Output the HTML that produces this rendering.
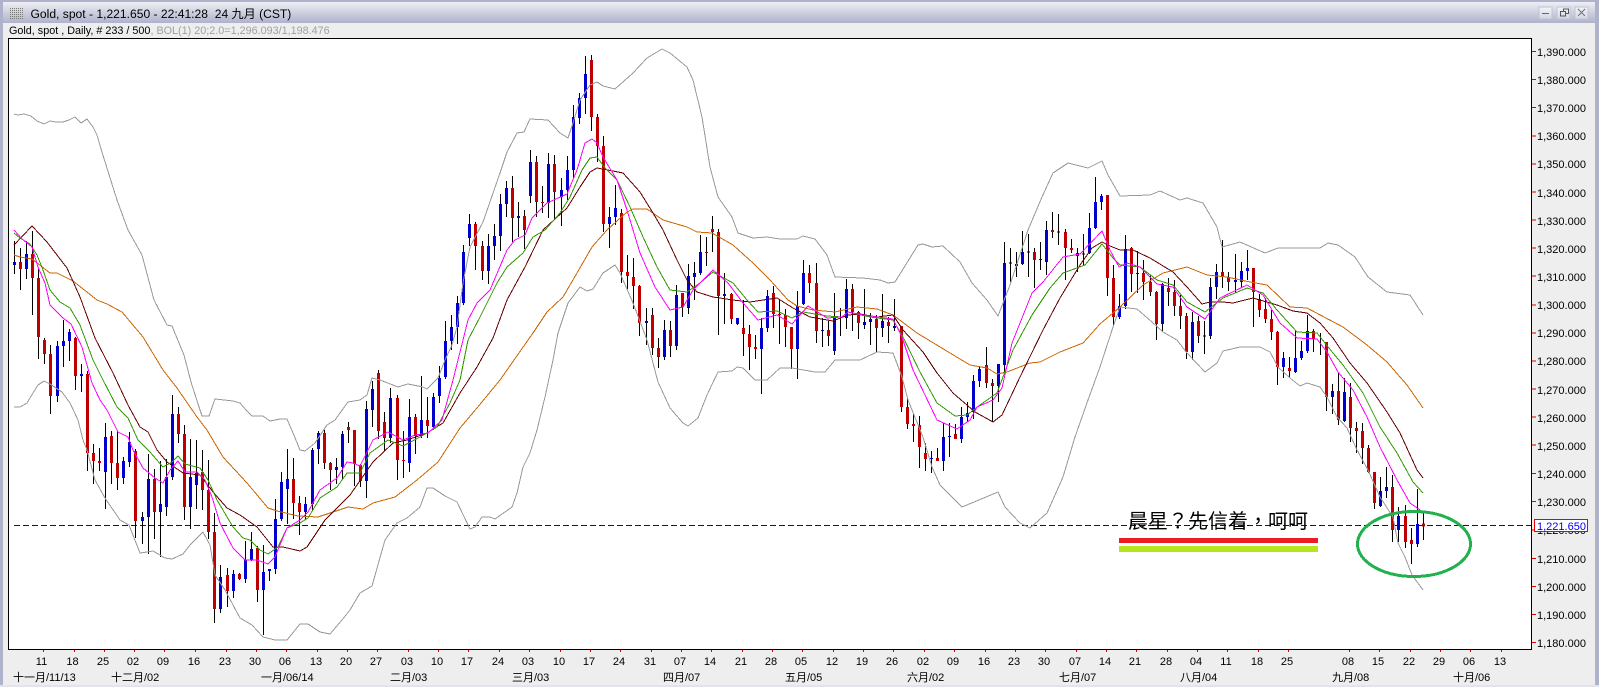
<!DOCTYPE html>
<html lang="zh">
<head>
<meta charset="utf-8">
<title>Gold, spot</title>
<style>
html,body{margin:0;padding:0;width:1599px;height:687px;overflow:hidden;background:#eeeeee}
svg{display:block;position:absolute;left:0;top:0}
text{font-family:"Liberation Sans","WenQuanYi Zen Hei","Noto Sans CJK SC",sans-serif;fill:#000}
.y text{font-size:11px}
.x text{font-size:11px;text-anchor:middle}
.m text{font-size:11px}
</style>
</head>
<body>
<svg width="1599" height="687" viewBox="0 0 1599 687" shape-rendering="crispEdges">
<defs>
<linearGradient id="tb" x1="0" y1="0" x2="0" y2="1"><stop offset="0" stop-color="#eeeef4"/><stop offset="1" stop-color="#aeb2cb"/></linearGradient>
<linearGradient id="bt" x1="0" y1="0" x2="0" y2="1"><stop offset="0" stop-color="#f4f4f8"/><stop offset="1" stop-color="#d2d5e2"/></linearGradient>
<pattern id="dots" width="2" height="2" patternUnits="userSpaceOnUse"><rect width="1" height="1" fill="#777"/></pattern>
</defs>
<rect width="1599" height="687" fill="#eeeeee"/>
<rect x="0" y="0" width="1599" height="2" fill="#aeb2cb"/>
<rect x="0" y="0" width="3" height="687" fill="#aeb2cb"/>
<rect x="1595" y="0" width="4" height="687" fill="#aeb2cb"/>
<rect x="0" y="685" width="1599" height="2" fill="#e2e3ef"/>
<rect x="3" y="2" width="1592" height="21" fill="url(#tb)"/>
<rect x="10" y="7" width="14" height="12" fill="url(#dots)"/>
<text x="30.500" y="18" font-size="12.100">Gold, spot - 1,221.650 - 22:41:28&#160; 24 九月 (CST)</text>
<rect x="1539" y="7" width="13" height="12" fill="url(#bt)" stroke="#c0c3d4"/>
<rect x="1557" y="7" width="13" height="12" fill="url(#bt)" stroke="#c0c3d4"/>
<rect x="1575" y="7" width="13" height="12" fill="url(#bt)" stroke="#c0c3d4"/>
<path d="M1542 13.500h7" stroke="#666" fill="none"/>
<path d="M1563.500 11.500v-2.500h5v4.500h-2.500M1560.500 11.500h5v4.500h-5z" stroke="#555" fill="none"/>
<path d="M1578 9l7 7M1585 9l-7 7" stroke="#777" fill="none"/>
<text x="9" y="34" font-size="10.800">Gold, spot , Daily, # 233 / 500<tspan fill="#a0a0a0">, BOL(1) 20;2.0=1,296.093/1,198.476</tspan></text>

<rect x="8.500" y="38.500" width="1523" height="611" fill="#ffffff" stroke="#000"/>

<path d="M14 525.500H1531" stroke="#0000ee" stroke-dasharray="6 3" fill="none"/>

<!-- wicks -->
<path fill="none" stroke="#000" d="M14.500 241V274M20.500 248V290M26.500 241V279M32.500 231V315M38.500 268V359M44.500 338V364M50.500 345V414M57.500 341V402M63.500 320V367M69.500 329V361M75.500 337V390M81.500 364V392M87.500 371V471M93.500 444V484M99.500 448V471M105.500 423V509M111.500 431V484M117.500 431V490M123.500 457V484M129.500 432V467M135.500 449V538M142.500 512V544M148.500 454V554M154.500 469V539M160.500 461V557M166.500 459V516M172.500 395V480M178.500 407V443M184.500 425V520M190.500 439V529M196.500 440V509M202.500 450V510M208.500 460V539M214.500 513V623M220.500 565V613M227.500 568V607M233.500 570V598M239.500 573V580M245.500 541V583M251.500 532V561M257.500 546V602M263.500 545V635M269.500 569V581M275.500 499V574M281.500 472V521M287.500 449V524M293.500 458V519M299.500 496V535M305.500 497V520M312.500 448V510M318.500 431V464M324.500 430V469M330.500 462V490M336.500 458V484M342.500 431V480M348.500 422V443M354.500 430V486M360.500 464V487M366.500 401V498M372.500 381V427M378.500 370V439M384.500 412V451M390.500 388V443M397.500 395V480M403.500 431V478M409.500 399V472M415.500 414V454M421.500 376V438M427.500 397V438M433.500 393V430M439.500 366V403M445.500 321V379M451.500 315V350M457.500 296V344M463.500 245V305M469.500 214V246M475.500 222V270M482.500 241V280M488.500 234V284M494.500 224V260M500.500 194V251M506.500 181V217M512.500 176V242M518.500 202V237M524.500 210V249M530.500 150V203M536.500 156V217M542.500 186V213M548.500 153V218M554.500 155V219M561.500 178V226M567.500 156V200M573.500 105V178M579.500 93V124M585.500 56V114M591.500 55V131M597.500 114V162M603.500 136V232M609.500 207V248M615.500 185V225M621.500 209V283M627.500 255V289M633.500 258V309M639.500 285V336M646.500 308V345M652.500 308V355M658.500 338V368M664.500 320V360M670.500 321V357M676.500 285V350M682.500 293V317M688.500 264V314M694.500 262V300M700.500 235V275M706.500 237V266M712.500 216V252M718.500 229V335M724.500 273V324M731.500 293V324M737.500 318V325M743.500 300V356M749.500 325V370M755.500 335V359M761.500 318V394M767.500 290V332M773.500 286V328M779.500 299V344M785.500 309V347M791.500 327V369M797.500 291V379M803.500 260V305M809.500 265V293M816.500 263V343M822.500 318V347M828.500 321V346M834.500 293V355M840.500 308V336M846.500 279V329M852.500 284V331M858.500 311V339M864.500 289V329M870.500 313V345M876.500 315V352M882.500 294V337M888.500 317V343M894.500 299V331M901.500 326V412M907.500 398V429M913.500 414V442M919.500 416V468M925.500 443V471M931.500 451V473M937.500 448V461M943.500 423V471M949.500 423V457M955.500 424V439M961.500 407V443M967.500 402V422M973.500 375V419M979.500 366V387M986.500 347V388M992.500 379V422M998.500 364V402M1004.500 242V373M1010.500 248V282M1016.500 252V277M1022.500 231V265M1028.500 234V277M1034.500 248V288M1040.500 242V270M1046.500 221V275M1052.500 212V238M1058.500 214V245M1065.500 229V280M1071.500 239V253M1077.500 248V272M1083.500 234V266M1089.500 213V254M1095.500 177V229M1101.500 194V210M1107.500 195V296M1113.500 265V325M1119.500 294V319M1125.500 235V309M1131.500 247V292M1137.500 251V293M1143.500 260V300M1150.500 275V296M1156.500 291V340M1162.500 283V331M1168.500 278V306M1174.500 280V316M1180.500 295V329M1186.500 313V359M1192.500 312V360M1198.500 316V343M1204.500 321V354M1210.500 278V339M1216.500 264V299M1222.500 240V288M1228.500 272V291M1235.500 254V293M1241.500 262V287M1247.500 250V280M1253.500 268V327M1259.500 294V317M1265.500 298V323M1271.500 310V340M1277.500 331V385M1283.500 352V378M1289.500 357V377M1295.500 330V373M1301.500 341V360M1307.500 315V353M1313.500 329V352M1320.500 333V355M1326.500 342V411M1332.500 384V414M1338.500 373V425M1344.500 378V422M1350.500 383V442M1356.500 422V453M1362.500 423V464M1368.500 445V473M1374.500 472V509M1380.500 477V507M1386.500 467V498M1392.500 475V542M1398.500 507V542M1405.500 505V548M1411.500 528V564M1417.500 489V547M1423.500 511V540M1009 263h3M1027 252h3M1057 232h3M1082 254h3M1203 336h3"/>

<!-- blue bodies -->
<path fill="none" stroke="#0000cc" stroke-width="3" d="M14.500 262V265M26.500 254V269M57.500 346V396M63.500 341V346M69.500 332V341M81.500 374V376M105.500 437V472M123.500 461V478M129.500 442V462M142.500 517V521M148.500 479V517M160.500 504V512M166.500 477V507M172.500 414V477M190.500 477V507M196.500 473V485M220.500 577V609M233.500 574V591M245.500 560V579M251.500 549V560M263.500 572V590M269.500 569V571M275.500 519V569M281.500 482V519M287.500 479V489M305.500 504V512M312.500 450V504M318.500 433V449M336.500 467V470M342.500 434V467M366.500 409V481M372.500 389V410M390.500 398V438M409.500 417V463M421.500 420V436M433.500 397V427M439.500 378V396M445.500 341V377M451.500 327V341M457.500 303V327M463.500 252V303M469.500 224V238M488.500 246V271M494.500 236V246M500.500 204V236M506.500 188V204M518.500 216V218M530.500 162V196M548.500 164V203M561.500 190V197M567.500 170V190M573.500 117V170M579.500 98V118M585.500 74V98M609.500 217V224M615.500 208V217M646.500 321V323M664.500 330V357M676.500 295V346M688.500 276V308M694.500 273V277M700.500 252V273M724.500 294V296M737.500 318V324M761.500 328V349M767.500 296V328M797.500 306V349M803.500 273V304M822.500 330V331M834.500 317V351M846.500 289V318M864.500 322V325M870.500 319V322M882.500 321V328M894.500 326V328M931.500 458V459M943.500 437V461M949.500 436V437M961.500 417V439M967.500 413V417M973.500 381V412M979.500 369V381M998.500 364V386M1004.500 263V365M1016.500 264V266M1022.500 252V264M1040.500 259V260M1046.500 230V262M1077.500 253V256M1089.500 228V253M1095.500 202V228M1101.500 196V202M1119.500 306V317M1125.500 249V306M1137.500 273V274M1162.500 284V324M1192.500 322V352M1210.500 287V336M1216.500 272V287M1235.500 280V282M1241.500 271V282M1247.500 268V271M1283.500 358V367M1295.500 358V372M1301.500 351V358M1307.500 331V351M1332.500 391V397M1344.500 392V421M1380.500 491V506M1386.500 487V491M1398.500 516V530M1417.500 524V544"/>

<!-- red bodies -->
<path fill="none" stroke="#c00000" stroke-width="3" d="M20.500 262V269M32.500 254V278M38.500 278V337M44.500 340V354M50.500 354V396M75.500 338V376M87.500 374V453M93.500 453V461M99.500 461V463M111.500 436V463M117.500 463V478M135.500 451V521M154.500 479V512M178.500 414V434M184.500 434V507M202.500 472V490M208.500 490V532M214.500 532V609M227.500 575V591M239.500 574V579M257.500 548V590M293.500 479V503M299.500 503V512M324.500 433V463M330.500 463V470M348.500 427V430M354.500 430V464M360.500 465V481M378.500 373V431M384.500 422V438M397.500 398V460M403.500 460V461M415.500 417V436M427.500 420V426M475.500 224V246M482.500 246V271M512.500 188V218M524.500 216V230M536.500 162V202M542.500 202V203M554.500 164V192M591.500 60V117M597.500 117V146M603.500 146V224M621.500 213V272M627.500 272V276M633.500 277V286M639.500 286V323M652.500 315V348M658.500 348V357M670.500 330V346M682.500 293V307M706.500 252V253M712.500 229V232M718.500 232V296M731.500 294V319M743.500 328V334M749.500 334V347M755.500 347V349M773.500 293V314M779.500 314V315M785.500 315V327M791.500 327V349M809.500 273V283M816.500 283V331M828.500 330V336M852.500 289V312M858.500 312V323M876.500 319V328M888.500 322V326M901.500 326V407M907.500 407V424M913.500 424V426M919.500 425V447M925.500 453V459M937.500 458V461M955.500 434V439M986.500 365V383M992.500 383V386M1034.500 252V260M1052.500 230V232M1065.500 232V248M1071.500 248V250M1107.500 195V278M1113.500 278V317M1131.500 248V274M1143.500 273V282M1150.500 282V292M1156.500 292V324M1168.500 288V292M1174.500 292V306M1180.500 306V316M1186.500 316V352M1198.500 321V336M1222.500 272V277M1228.500 277V282M1253.500 268V292M1259.500 299V310M1265.500 309V319M1271.500 319V332M1277.500 332V367M1289.500 368V371M1313.500 331V339M1326.500 342V397M1338.500 391V420M1350.500 397V428M1356.500 428V431M1362.500 431V448M1368.500 448V472M1374.500 472V503M1392.500 487V530M1405.500 516V542M1411.500 540V544M1422 525h3"/>

<!-- bollinger -->
<g fill="none" stroke="#999999">
<polyline points="14,114 18,115 24,114 31,116 37,121 44,124 50,121 56,122 63,122 69,120 75,117 81,123 87,119 93,127 97,135 101,149 117,200 128,230 142,255 154,300 167,325 172,326 184,355 191,382 199,407 202,416 209,416 215,399 233,401 240,403 246,410 252,416 263,416 270,421 280,419 287,419 293,433 300,450 305,451 315,443 327,425 335,420 340,413 348,402 360,400 367,395 372,378 380,380 398,387 408,384 423,387 427,389 438,378 445,360 452,345 457,327 463,283 470,247 483,222 500,173 507,152 517,133 524,132 530,119 548,120 560,133 568,138 573,123 580,100 590,85 597,82 603,86 615,89 633,73 647,58 662,49 670,53 687,67 693,80 702,117 710,167 718,197 732,217 738,233 753,238 767,237 780,239 797,239 803,236 815,239 827,255 835,277 863,278 880,280 888,283 895,282 918,245 923,244 932,247 943,246 960,262 972,283 987,300 998,316 1010,285 1028,230 1042,197 1053,173 1068,163 1088,168 1102,161 1108,175 1120,196 1150,195 1160,191 1180,200 1187,198 1203,203 1217,227 1222,247 1240,242 1265,253 1278,248 1320,248 1328,243 1338,245 1355,257 1368,277 1387,292 1410,295 1423,315"/>
<polyline points="14,407 20,407 27,403 33,393 38,385 44,381 50,384 62,392 70,403 78,420 83,440 87,450 95,480 105,498 120,520 129,525 140,553 147,552 153,551 165,558 172,559 183,554 190,545 197,538 203,532 210,545 215,575 225,590 240,618 252,625 263,637 275,640 287,640 300,624 308,624 320,632 330,634 342,620 350,610 360,593 372,586 385,540 397,523 407,518 420,507 427,488 433,488 445,496 457,502 470,529 475,527 482,517 490,517 495,519 512,507 517,493 523,467 530,453 537,430 545,397 553,360 558,333 568,303 580,287 587,291 593,289 603,273 615,265 620,273 633,303 647,340 658,382 670,408 683,423 688,426 698,418 707,395 718,372 732,371 737,367 743,368 755,380 767,380 780,368 792,368 815,372 825,372 835,360 860,360 877,352 893,353 902,377 908,400 923,437 932,467 940,485 962,507 998,492 1005,507 1020,523 1030,528 1047,513 1063,477 1075,437 1088,400 1100,367 1112,330 1120,307 1137,309 1152,322 1163,332 1177,340 1187,353 1205,372 1217,363 1223,351 1240,347 1260,347 1270,352 1278,367 1290,378 1300,386 1307,383 1320,387 1327,397 1337,417 1347,428 1357,450 1368,470 1380,497 1393,517 1398,543 1405,557 1412,575 1423,590"/>
</g>
<!-- orange -->
<polyline fill="none" stroke="#cc6600" points="14,255 20,257 32,259 50,273 57,273 73,281 97,300 107,304 122,312 143,337 163,370 177,388 197,417 207,430 223,457 247,483 268,508 277,511 298,516 318,517 333,512 348,507 363,509 373,503 395,497 417,480 438,462 460,428 477,408 500,380 533,333 547,312 563,297 577,273 592,247 607,230 627,212 633,209 647,209 663,220 687,227 697,232 712,233 733,245 753,263 770,280 788,300 797,306 813,310 835,312 857,307 877,309 893,315 917,333 950,353 970,365 987,368 997,374 1007,372 1030,363 1040,362 1060,352 1083,343 1100,324 1120,307 1143,285 1163,273 1187,267 1207,275 1227,277 1250,282 1267,285 1290,307 1307,308 1343,327 1367,345 1387,362 1407,385 1423,408"/>
<!-- brown -->
<polyline fill="none" stroke="#660000" points="14,245 32,226 47,242 67,268 80,297 95,338 113,373 128,405 140,427 148,432 157,450 167,462 183,473 200,475 213,492 227,508 240,515 257,527 273,547 283,547 300,551 307,547 325,520 350,495 373,462 393,443 407,440 427,433 443,423 460,393 477,367 493,338 507,300 525,267 543,230 567,208 580,187 590,172 597,168 613,171 623,173 640,192 653,213 663,230 677,260 687,280 697,292 713,297 733,300 750,302 763,300 777,298 793,308 810,317 833,321 848,315 860,314 877,317 893,315 903,330 923,352 937,373 953,393 975,412 993,422 1002,415 1020,377 1043,330 1060,298 1080,265 1092,248 1102,242 1110,246 1120,250 1133,250 1150,258 1173,272 1187,287 1202,304 1210,302 1223,302 1233,303 1253,298 1277,305 1293,311 1307,313 1320,323 1333,338 1350,363 1367,383 1387,412 1400,433 1417,470 1423,478"/>
<!-- green -->
<polyline fill="none" stroke="#339900" points="14,233 20,238 30,244 37,255 43,270 50,290 60,302 70,308 80,325 93,360 103,380 117,407 128,418 138,440 150,452 163,467 172,462 178,456 185,464 200,468 208,480 217,500 233,527 243,538 250,540 260,550 268,554 278,547 287,528 300,523 308,518 320,498 337,487 347,473 360,473 370,453 388,440 403,446 420,437 437,427 450,403 460,380 468,340 480,317 497,283 507,267 523,253 533,237 545,230 560,213 570,197 582,170 590,158 597,157 605,168 617,180 630,207 643,237 657,267 670,290 687,292 700,283 713,272 733,283 747,300 758,312 777,311 792,318 803,312 827,316 842,317 848,312 870,317 893,320 903,337 920,372 937,403 955,416 967,415 980,405 997,393 1013,350 1032,315 1050,288 1063,273 1085,265 1102,244 1113,258 1120,265 1140,267 1157,280 1173,285 1187,302 1205,312 1223,298 1247,288 1263,293 1277,310 1297,332 1317,333 1333,353 1343,365 1363,393 1380,427 1397,453 1413,482 1423,493"/>
<!-- magenta -->
<polyline fill="none" stroke="#ff00ff" points="14,230 22,239 32,247 38,267 45,283 50,305 63,318 71,324 82,347 92,383 100,400 107,410 118,432 128,437 133,450 143,468 155,478 163,483 170,470 178,461 185,472 197,472 205,480 212,497 220,523 233,548 245,560 257,560 268,564 275,557 287,528 300,520 308,512 320,490 337,478 347,462 353,463 360,466 373,440 388,432 403,440 415,435 428,433 442,420 453,380 468,320 477,303 490,290 507,250 515,240 525,235 532,218 547,203 567,194 577,170 585,143 592,139 597,143 603,157 617,180 627,210 640,253 655,287 670,310 683,307 693,290 713,270 728,283 743,303 758,320 777,315 792,324 808,306 827,318 842,317 848,312 863,315 893,319 902,337 913,370 937,420 957,429 970,420 977,407 993,400 1002,388 1012,343 1032,293 1043,282 1063,257 1080,254 1102,231 1110,250 1119,267 1127,263 1140,267 1157,284 1173,287 1187,307 1205,319 1220,298 1247,285 1263,295 1280,323 1297,338 1317,339 1327,352 1338,372 1353,390 1367,417 1380,447 1397,480 1410,503 1423,512"/>

<!-- annotation -->
<text lang="zh-TW" x="1128" y="528" font-size="20" style="font-family:'Noto Sans CJK TC','Liberation Sans',sans-serif">晨星？先信着，呵呵</text>
<rect x="1119" y="538" width="199" height="5" fill="#ed1c24"/>
<rect x="1119" y="546" width="199" height="6" fill="#b5e61d"/>
<ellipse cx="1414" cy="544" rx="56.500" ry="32.500" fill="none" stroke="#22b14c" stroke-width="3"/>

<!-- y axis -->
<path fill="none" stroke="#e00000" d="M1532 51.500h4M1532 79.500h4M1532 107.500h4M1532 136h4M1532 164h4M1532 192h4M1532 220h4M1532 248h4M1532 276h4M1532 305h4M1532 333h4M1532 361h4M1532 389h4M1532 417h4M1532 445h4M1532 473.500h4M1532 501.500h4M1532 530h4M1532 558.500h4M1532 586.500h4M1532 614.500h4M1532 642.500h4"/>
<g class="y">
<text x="1537" y="56">1,390.000</text>
<text x="1537" y="84">1,380.000</text>
<text x="1537" y="112">1,370.000</text>
<text x="1537" y="140">1,360.000</text>
<text x="1537" y="168">1,350.000</text>
<text x="1537" y="197">1,340.000</text>
<text x="1537" y="225">1,330.000</text>
<text x="1537" y="253">1,320.000</text>
<text x="1537" y="281">1,310.000</text>
<text x="1537" y="309">1,300.000</text>
<text x="1537" y="337">1,290.000</text>
<text x="1537" y="365">1,280.000</text>
<text x="1537" y="394">1,270.000</text>
<text x="1537" y="422">1,260.000</text>
<text x="1537" y="450">1,250.000</text>
<text x="1537" y="478">1,240.000</text>
<text x="1537" y="506">1,230.000</text>
<text x="1537" y="534">1,220.000</text>
<text x="1537" y="563">1,210.000</text>
<text x="1537" y="591">1,200.000</text>
<text x="1537" y="619">1,190.000</text>
<text x="1537" y="647">1,180.000</text>
</g>
<rect x="1534.500" y="519.500" width="53" height="12" fill="#fff" stroke="#ee0000"/>
<text x="1537" y="530" font-size="11" style="fill:#0000ee">1,221.650</text>

<!-- x axis -->
<path fill="none" stroke="#e00000" d="M43.500 650v2M74.500 650v2M104.500 650v2M134.500 650v2M164.500 650v2M195.500 650v2M226.500 650v2M256.500 650v2M286.500 650v2M317.500 650v2M347.500 650v2M377.500 650v2M408.500 650v2M438.500 650v2M468.500 650v2M499.500 650v2M529.500 650v2M560.500 650v2M590.500 650v2M620.500 650v2M651.500 650v2M681.500 650v2M711.500 650v2M742.500 650v2M772.500 650v2M802.500 650v2M833.500 650v2M863.500 650v2M893.500 650v2M924.500 650v2M954.500 650v2M985.500 650v2M1015.500 650v2M1045.500 650v2M1076.500 650v2M1106.500 650v2M1136.500 650v2M1167.500 650v2M1197.500 650v2M1227.500 650v2M1258.500 650v2M1288.500 650v2M1349.500 650v2M1379.500 650v2M1410.500 650v2M1440.500 650v2M1470.500 650v2M1501.500 650v2"/>
<g class="x">
<text x="41.500" y="665">11</text><text x="72.500" y="665">18</text><text x="103" y="665">25</text><text x="133" y="665">02</text><text x="163" y="665">09</text><text x="194" y="665">16</text><text x="225" y="665">23</text><text x="255" y="665">30</text><text x="285" y="665">06</text><text x="316" y="665">13</text><text x="346" y="665">20</text><text x="376" y="665">27</text><text x="407" y="665">03</text><text x="437" y="665">10</text><text x="467" y="665">17</text><text x="498" y="665">24</text><text x="528" y="665">03</text><text x="559" y="665">10</text><text x="589" y="665">17</text><text x="619" y="665">24</text><text x="650" y="665">31</text><text x="680" y="665">07</text><text x="710" y="665">14</text><text x="741" y="665">21</text><text x="771" y="665">28</text><text x="801" y="665">05</text><text x="832" y="665">12</text><text x="862" y="665">19</text><text x="892" y="665">26</text><text x="923" y="665">02</text><text x="953" y="665">09</text><text x="984" y="665">16</text><text x="1014" y="665">23</text><text x="1044" y="665">30</text><text x="1075" y="665">07</text><text x="1105" y="665">14</text><text x="1135" y="665">21</text><text x="1166" y="665">28</text><text x="1196" y="665">04</text><text x="1226" y="665">11</text><text x="1257" y="665">18</text><text x="1287" y="665">25</text><text x="1348" y="665">08</text><text x="1378" y="665">15</text><text x="1409" y="665">22</text><text x="1439" y="665">29</text><text x="1469" y="665">06</text><text x="1500" y="665">13</text>
</g>
<g class="m">
<text x="13" y="681">十一月/11/13</text>
<text x="111" y="681">十二月/02</text>
<text x="261" y="681">一月/06/14</text>
<text x="390" y="681">二月/03</text>
<text x="512" y="681">三月/03</text>
<text x="663" y="681">四月/07</text>
<text x="785" y="681">五月/05</text>
<text x="907" y="681">六月/02</text>
<text x="1059" y="681">七月/07</text>
<text x="1180" y="681">八月/04</text>
<text x="1332" y="681">九月/08</text>
<text x="1453" y="681">十月/06</text>
</g>
</svg>
</body>
</html>
